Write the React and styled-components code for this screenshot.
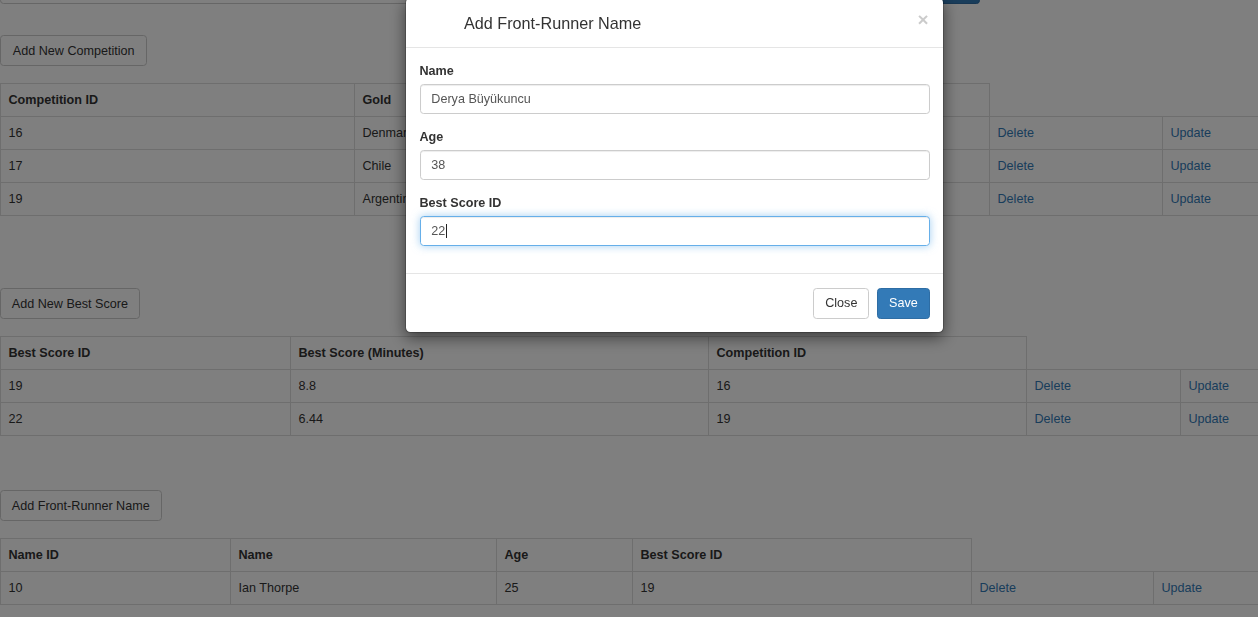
import React from "react";
import styled, { createGlobalStyle, css } from "styled-components";

const GlobalStyle = createGlobalStyle`
  * { box-sizing: border-box; }
  html, body { margin: 0; padding: 0; background: #fff; overflow: hidden; }
  body {
    font-family: "Liberation Sans", Arial, Helvetica, sans-serif;
    font-size: 12.6px;
    line-height: 18px;
    color: #333;
  }
`;

const Page = styled.div`
  width: 100%;
`;

const TopForm = styled.div`
  display: flex;
  gap: 6px;
  height: 31px;
  margin-top: -27px;
`;

const TopInput = styled.div`
  width: 884px;
  height: 31px;
  border: 1px solid #ccc;
  border-radius: 3.6px;
  box-shadow: inset 0 1px 1px rgba(0, 0, 0, 0.075);
`;

const btnBase = css`
  display: inline-flex;
  align-items: center;
  height: 31px;
  padding: 0 10.8px;
  border: 1px solid #ccc;
  border-radius: 3.6px;
  background: #fff;
  color: #333;
  font-family: inherit;
  font-size: 12.6px;
  line-height: 18px;
  white-space: nowrap;
  cursor: pointer;
`;

const Button = styled.button`
  ${btnBase}
  padding: 0 ${(p) => (p.$wide ? 11.8 : 10.8)}px;
  ${(p) =>
    p.$primary &&
    css`
      background: #337ab7;
      border-color: #2e6da4;
      color: #fff;
    `}
`;

const TopButton = styled(Button)`
  width: 90px;
  justify-content: center;
`;

const Section = styled.section`
  margin-top: ${(p) => p.$gap}px;
`;

const Table = styled.table`
  width: calc(100% + 1px);
  table-layout: fixed;
  border-collapse: collapse;
  border-spacing: 0;
  margin-top: 17px;
`;

const Col = styled.col`
  width: ${(p) => (p.$w ? `${p.$w}px` : "auto")};
`;

const Th = styled.th`
  text-align: left;
  font-weight: bold;
  padding: 7px 7.5px;
  line-height: 18px;
  border: 1px solid #ddd;
  white-space: nowrap;
  overflow: hidden;
`;

const Td = styled.td`
  padding: 7px 7.5px;
  line-height: 18px;
  border: 1px solid #ddd;
  white-space: nowrap;
  overflow: hidden;
`;

const Link = styled.a`
  color: #337ab7;
  text-decoration: none;
`;

const Backdrop = styled.div`
  position: fixed;
  inset: 0;
  background: rgba(0, 0, 0, 0.5);
`;

const Modal = styled.div`
  position: fixed;
  top: -3px;
  left: 405px;
  width: 539px;
  background: #fff;
  background-clip: padding-box;
  border: 1px solid rgba(0, 0, 0, 0.2);
  border-radius: 5.4px;
  box-shadow: 0 5px 15px rgba(0, 0, 0, 0.5);
`;

const ModalHeader = styled.div`
  display: flex;
  justify-content: space-between;
  align-items: flex-start;
  padding: 13.5px 13.5px 12.5px;
  border-bottom: 1px solid #e5e5e5;
`;

const ModalTitle = styled.h4`
  margin: 0;
  padding-left: 44.5px;
  font-size: 16.2px;
  line-height: 23px;
  font-weight: 500;
  color: #333;
`;

const CloseX = styled.button`
  background: none;
  border: 0;
  padding: 0;
  margin-top: -2px;
  margin-right: 1px;
  font-family: inherit;
  font-size: 19px;
  font-weight: bold;
  line-height: 1;
  color: #000;
  opacity: 0.2;
  text-shadow: 0 1px 0 #fff;
`;

const ModalBody = styled.div`
  padding: 13.5px;
`;

const FormGroup = styled.div`
  margin-bottom: 13.5px;
`;

const Label = styled.label`
  display: block;
  font-weight: bold;
  margin-bottom: 4.5px;
  line-height: 18px;
`;

const TextBox = styled.div`
  display: flex;
  align-items: center;
  height: 30px;
  padding: 0 10.8px;
  border: 1px solid #ccc;
  border-radius: 3.6px;
  color: #555;
  box-shadow: inset 0 1px 1px rgba(0, 0, 0, 0.075);
  ${(p) =>
    p.$focused &&
    css`
      border-color: #66afe9;
      box-shadow: inset 0 1px 1px rgba(0, 0, 0, 0.075),
        0 0 8px rgba(102, 175, 233, 0.6);
    `}
`;

const Caret = styled.span`
  display: inline-block;
  width: 1px;
  height: 14px;
  margin-left: 1px;
  background: #222;
`;

const ModalFooter = styled.div`
  display: flex;
  justify-content: flex-end;
  gap: 8px;
  padding: 13.5px;
  border-top: 1px solid #e5e5e5;
`;

function DataTable({ cols, headers, rows }) {
  return (
    <Table>
      <colgroup>
        {cols.map((w, i) => (
          <Col key={i} $w={w} />
        ))}
      </colgroup>
      <thead>
        <tr>
          {headers.map((h) => (
            <Th key={h}>{h}</Th>
          ))}
        </tr>
      </thead>
      <tbody>
        {rows.map((r, i) => (
          <tr key={i}>
            {r.map((c, j) => (
              <Td key={j}>{c}</Td>
            ))}
            <Td>
              <Link href="#">Delete</Link>
            </Td>
            <Td>
              <Link href="#">Update</Link>
            </Td>
          </tr>
        ))}
      </tbody>
    </Table>
  );
}

export default function App() {
  return (
    <>
      <GlobalStyle />
      <Page>
        <TopForm>
          <TopInput />
          <TopButton $primary aria-label="Search" />
        </TopForm>

        <Section $gap={31}>
          <Button $wide>Add New Competition</Button>
          <DataTable
            cols={[354, 212, 212, 211, 173, null]}
            headers={["Competition ID", "Gold", "Silver", "Bronze"]}
            rows={[
              ["16", "Denmark", "Norway", "Sweden"],
              ["17", "Chile", "Peru", "Brazil"],
              ["19", "Argentina", "Uruguay", "Spain"],
            ]}
          />
        </Section>

        <Section $gap={72}>
          <Button>Add New Best Score</Button>
          <DataTable
            cols={[290, 418, 318, 154, null]}
            headers={["Best Score ID", "Best Score (Minutes)", "Competition ID"]}
            rows={[
              ["19", "8.8", "16"],
              ["22", "6.44", "19"],
            ]}
          />
        </Section>

        <Section $gap={54}>
          <Button>Add Front-Runner Name</Button>
          <DataTable
            cols={[230, 266, 136, 339, 182, null]}
            headers={["Name ID", "Name", "Age", "Best Score ID"]}
            rows={[["10", "Ian Thorpe", "25", "19"]]}
          />
        </Section>
      </Page>

      <Backdrop />
      <Modal role="dialog">
        <ModalHeader>
          <ModalTitle>Add Front-Runner Name</ModalTitle>
          <CloseX aria-label="Close">×</CloseX>
        </ModalHeader>
        <ModalBody>
          <FormGroup>
            <Label>Name</Label>
            <TextBox>Derya Büyükuncu</TextBox>
          </FormGroup>
          <FormGroup>
            <Label>Age</Label>
            <TextBox>38</TextBox>
          </FormGroup>
          <FormGroup>
            <Label>Best Score ID</Label>
            <TextBox $focused>
              22
              <Caret />
            </TextBox>
          </FormGroup>
        </ModalBody>
        <ModalFooter>
          <Button>Close</Button>
          <Button $primary>Save</Button>
        </ModalFooter>
      </Modal>
    </>
  );
}
